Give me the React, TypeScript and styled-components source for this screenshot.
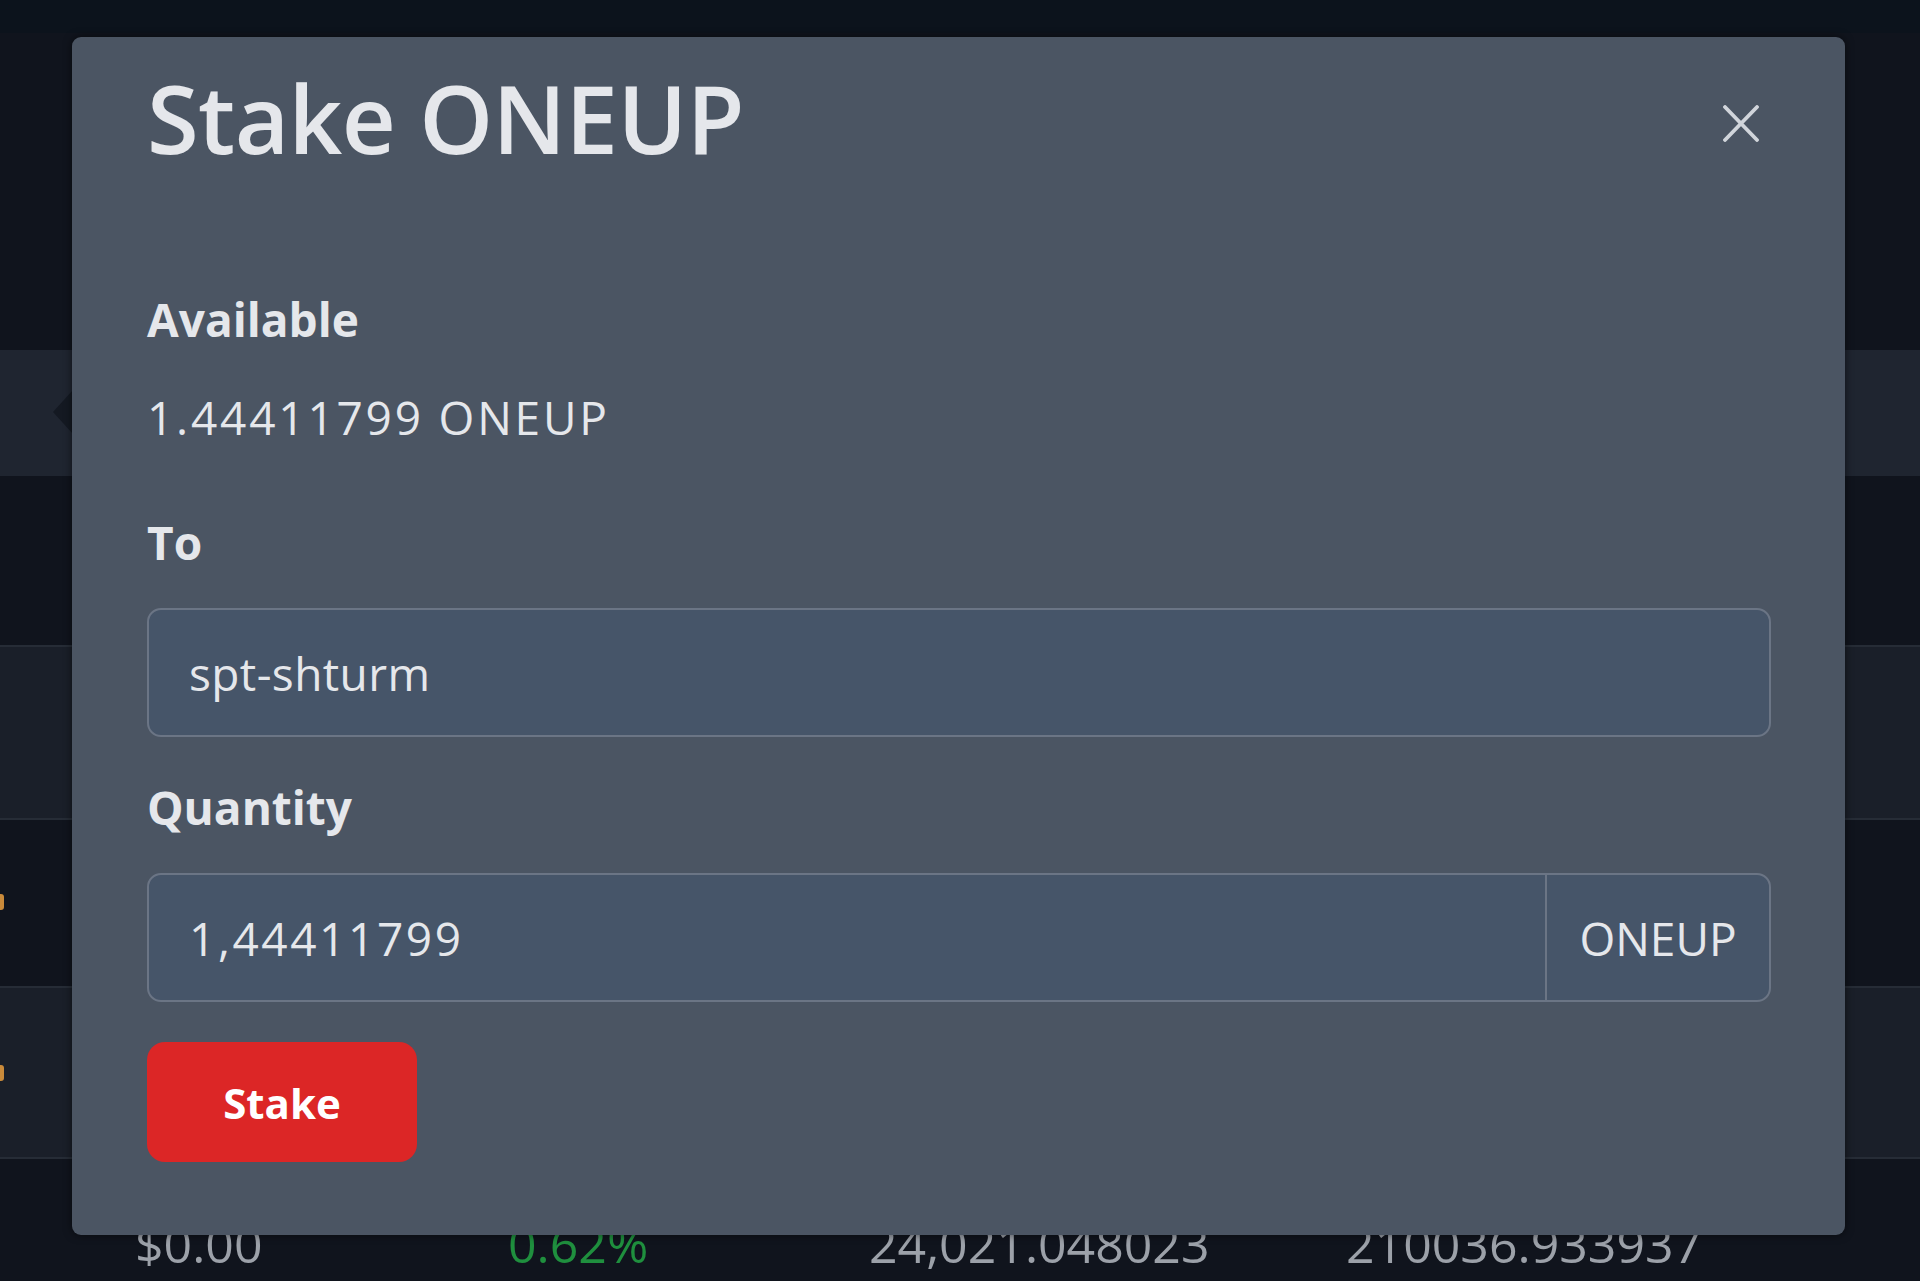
import React from "react"
import styled, { createGlobalStyle } from "styled-components"

const GlobalStyle = createGlobalStyle`
  html, body {
    margin: 0;
    padding: 0;
    background: #10141d;
    font-family: "Open Sans", "Noto Sans", sans-serif;
  }
  * { box-sizing: border-box; }
`

export default function App() {
  return (
    <>
      <GlobalStyle />
      <Page>
        <TopBar />
        <Band $h={317} />
        <Pager>
          <svg width="20" height="44" viewBox="0 0 20 44">
            <polygon points="0,22 20,0 20,44" fill="#141922" />
          </svg>
        </Pager>
        <Band $h={169} />
        <Row $light $h={173} />
        <Row $h={168}>
          <Coin $top={74} />
        </Row>
        <Row $light $h={171}>
          <Coin $top={77} />
        </Row>
        <Row $h={124}>
          <Cells>
            <Cell>$0.00</Cell>
            <Cell $green>0.62%</Cell>
            <Cell>24,021.048023</Cell>
            <Cell>210036.933937</Cell>
          </Cells>
        </Row>

        <Overlay>
          <Dialog>
            <Header>
              <Title>Stake ONEUP</Title>
              <Close aria-label="Close">
                <svg width="36" height="37" viewBox="0 0 36 37">
                  <path d="M2 2 L34 35 M34 2 L2 35" stroke="#d1d5db" strokeWidth="3.8" strokeLinecap="round" />
                </svg>
              </Close>
            </Header>
            <Label $mt={112}>Available</Label>
            <Value>1.44411799 ONEUP</Value>
            <Label $mt={61}>To</Label>
            <Field>
              <Input defaultValue="spt-shturm" />
            </Field>
            <Label $mt={38}>Quantity</Label>
            <Field>
              <Input $spaced defaultValue="1,44411799" />
              <Addon>ONEUP</Addon>
            </Field>
            <StakeButton>Stake</StakeButton>
          </Dialog>
        </Overlay>
      </Page>
    </>
  )
}

const Page = styled.div`
  position: relative;
  width: 1920px;
  height: 1281px;
  overflow: hidden;
  display: flex;
  flex-direction: column;
  background: #10141d;
`

const TopBar = styled.div`
  height: 33px;
  flex: none;
  background: #0c131c;
`

const Band = styled.div<{ $h: number }>`
  height: ${p => p.$h}px;
  flex: none;
`

const Pager = styled.div`
  height: 126px;
  flex: none;
  background: #1f2530;
  display: flex;
  align-items: center;
  padding-left: 53px;
  padding-bottom: 2px;
`

const Row = styled.div<{ $light?: boolean; $h: number }>`
  position: relative;
  height: ${p => p.$h}px;
  flex: none;
  background: ${p => (p.$light ? "#1a1f29" : "#10141d")};
  border-top: 2px solid #262c36;
`

const Coin = styled.span<{ $top: number }>`
  position: absolute;
  left: -8px;
  top: ${p => p.$top}px;
  width: 12px;
  height: 16px;
  border-radius: 3px;
  background: #c98a3a;
`

const Cells = styled.div`
  display: grid;
  grid-template-columns: 373px 361px 477px 1fr;
  padding: 53px 0 0 135px;
`

const Cell = styled.div<{ $green?: boolean }>`
  font-size: 50px;
  line-height: 64px;
  color: ${p => (p.$green ? "#1f8f3e" : "#9ca1a9")};
`

const Overlay = styled.div`
  position: absolute;
  inset: 0;
  padding: 37px 0 0 72px;
`

const Dialog = styled.div`
  width: 1773px;
  background: #4b5563;
  border-radius: 9px;
  box-shadow: 0 0 8px rgba(0, 0, 0, 0.55);
  padding: 25px 74px 73px 75px;
  display: flex;
  flex-direction: column;
  align-items: flex-start;
  color: #e5e7eb;
`

const Header = styled.div`
  width: 100%;
  height: 113px;
  display: flex;
  justify-content: space-between;
  align-items: flex-start;
`

const Title = styled.h5`
  margin: 0;
  font-size: 94px;
  line-height: 113px;
  font-weight: 600;
  letter-spacing: -0.6px;
  color: #e5e7eb;
`

const Close = styled.button`
  margin: 43px 12px 0 0;
  padding: 0;
  border: none;
  background: none;
  display: flex;
`

const Label = styled.div<{ $mt: number }>`
  margin-top: ${p => p.$mt}px;
  font-size: 46px;
  line-height: 64px;
  font-weight: 700;
`

const Value = styled.div`
  margin-top: 34px;
  font-size: 46px;
  line-height: 64px;
  font-weight: 400;
  letter-spacing: 2.8px;
`

const Field = styled.div`
  margin-top: 34px;
  width: 100%;
  height: 129px;
  display: flex;
  background: #465569;
  border: 2px solid #6b7585;
  border-radius: 14px;
  overflow: hidden;
`

const Input = styled.input<{ $spaced?: boolean }>`
  flex: 1;
  min-width: 0;
  border: none;
  outline: none;
  background: transparent;
  padding: 0 0 0 40px;
  font-family: "Open Sans", "Noto Sans", sans-serif;
  font-size: 46px;
  letter-spacing: ${p => (p.$spaced ? "2.6px" : "0.4px")};
  color: #e5e7eb;
`

const Addon = styled.div`
  width: 224px;
  flex: none;
  display: flex;
  align-items: center;
  justify-content: center;
  border-left: 2px solid #6b7585;
  font-size: 46px;
  color: #e5e7eb;
`

const StakeButton = styled.button`
  margin-top: 40px;
  width: 270px;
  height: 120px;
  border: none;
  border-radius: 18px;
  background: #dc2626;
  color: #ffffff;
  font-family: "Open Sans", "Noto Sans", sans-serif;
  font-size: 42px;
  font-weight: 700;
`
